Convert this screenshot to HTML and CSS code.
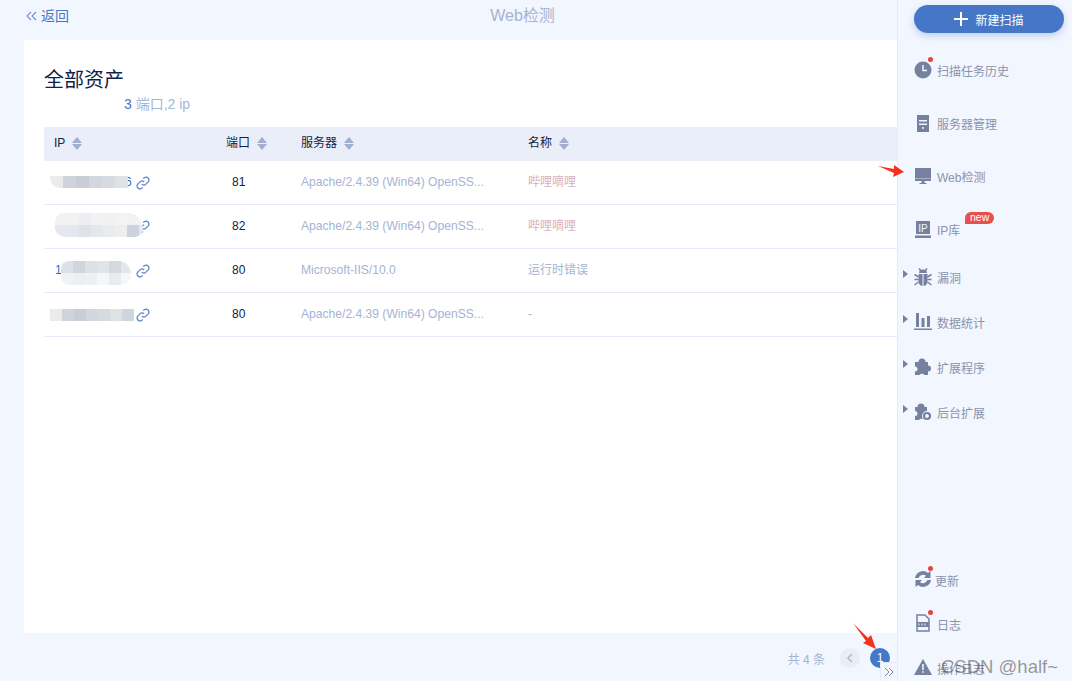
FILE: index.html
```html
<!DOCTYPE html>
<html lang="zh-CN">
<head>
    <meta charset="UTF-8">
    <meta name="viewport" content="width=device-width, initial-scale=1.0">
    <title>Web检测</title>
    <link rel="stylesheet" href="styles.css">
</head>
<body>
    <div class="app">
        <div class="main">
            <div class="topbar">
                <a class="back">
                    <svg width="11" height="10" viewBox="0 0 11 10"><path d="M5 1 1 5l4 4M10 1 6 5l4 4" fill="none" stroke="#6f8fc9" stroke-width="1.1"/></svg>
                    返回
                </a>
                <div class="page-title">Web检测</div>
            </div>

            <div class="card">
                <h2>全部资产</h2>
                <div class="summary"><b>3</b> 端口,2 ip</div>

                <div class="row head">
                    <div class="col-ip">IP <i class="sort"></i></div>
                    <div class="col-port">端口 <i class="sort"></i></div>
                    <div class="col-server">服务器 <i class="sort"></i></div>
                    <div class="col-name">名称 <i class="sort"></i></div>
                </div>

                <div class="row">
                    <div class="col-ip">
                        <span class="ip-end">6</span>
                        <span class="mosaic m1"><i></i><i></i><i></i><i></i><i></i><i></i></span>
                        <svg class="link" width="14" height="14" viewBox="0 0 24 24"><path d="M10 14a5 5 0 0 0 7 0l4-4a5 5 0 0 0-7-7l-1.500 1.500M14 10a5 5 0 0 0-7 0l-4 4a5 5 0 0 0 7 7l1.500-1.500" fill="none" stroke="#5b86cc" stroke-width="2.200"/></svg>
                    </div>
                    <div class="col-port">81</div>
                    <div class="col-server">Apache/2.4.39 (Win64) OpenSS...</div>
                    <div class="col-name pink">哔哩嘀哩</div>
                </div>
                <div class="row">
                    <div class="col-ip">
                        <span class="ip-start tiny">1</span>
                        <svg class="link" width="14" height="14" viewBox="0 0 24 24"><path d="M10 14a5 5 0 0 0 7 0l4-4a5 5 0 0 0-7-7l-1.500 1.500M14 10a5 5 0 0 0-7 0l-4 4a5 5 0 0 0 7 7l1.500-1.500" fill="none" stroke="#5b86cc" stroke-width="2.200"/></svg>
                        <span class="mosaic m2"><i></i><i></i><i></i><i></i><i></i><i></i><i></i><i></i></span>
                    </div>
                    <div class="col-port">82</div>
                    <div class="col-server">Apache/2.4.39 (Win64) OpenSS...</div>
                    <div class="col-name pink">哔哩嘀哩</div>
                </div>
                <div class="row">
                    <div class="col-ip">
                        <span class="ip-start">1</span>
                        <span class="mosaic m3"><i></i><i></i><i></i><i></i><i></i><i></i></span>
                        <svg class="link" width="14" height="14" viewBox="0 0 24 24"><path d="M10 14a5 5 0 0 0 7 0l4-4a5 5 0 0 0-7-7l-1.500 1.500M14 10a5 5 0 0 0-7 0l-4 4a5 5 0 0 0 7 7l1.500-1.500" fill="none" stroke="#5b86cc" stroke-width="2.200"/></svg>
                    </div>
                    <div class="col-port">80</div>
                    <div class="col-server">Microsoft-IIS/10.0</div>
                    <div class="col-name">运行时错误</div>
                </div>
                <div class="row">
                    <div class="col-ip">
                        <span class="mosaic m4"><i></i><i></i><i></i><i></i><i></i><i></i><i></i></span>
                        <svg class="link" width="14" height="14" viewBox="0 0 24 24"><path d="M10 14a5 5 0 0 0 7 0l4-4a5 5 0 0 0-7-7l-1.500 1.500M14 10a5 5 0 0 0-7 0l-4 4a5 5 0 0 0 7 7l1.500-1.500" fill="none" stroke="#5b86cc" stroke-width="2.200"/></svg>
                    </div>
                    <div class="col-port">80</div>
                    <div class="col-server">Apache/2.4.39 (Win64) OpenSS...</div>
                    <div class="col-name">-</div>
                </div>
            </div>

            <div class="pager">
                <span class="total">共 4 条</span>
                <span class="page-btn">
                    <svg width="8" height="10" viewBox="0 0 8 10"><path d="M6 1 2 5l4 4" fill="none" stroke="#b4bccb" stroke-width="1.600"/></svg>
                </span>
                <span class="page-num">1</span>
            </div>
        </div>

        <div class="sidebar">
            <div class="new-scan"><span class="plus"></span>新建扫描</div>

            <div class="menu">
                <div class="item">
                    <span class="ico dot">
                        <svg width="18" height="18" viewBox="0 0 18 18"><circle cx="9" cy="9" r="8.500" fill="#76809f"/><path d="M9 4v5.500h4" fill="none" stroke="#f2f6fe" stroke-width="1.500"/></svg>
                    </span>
                    扫描任务历史
                </div>
                <div class="item">
                    <span class="ico">
                        <svg width="18" height="18" viewBox="0 0 18 18"><path d="M3 1h12v17H3z" fill="#76809f"/><path d="M5 6h8v1.500H5zM5 9.500h8V11H5z" fill="#f2f6fe"/><circle cx="9" cy="14" r="1" fill="#f2f6fe"/></svg>
                    </span>
                    服务器管理
                </div>
                <div class="item">
                    <span class="ico">
                        <svg width="18" height="18" viewBox="0 0 18 18"><path d="M1 1h16v13H1z" fill="#76809f"/><path d="M1 11h16v1H1z" fill="#a9b0c6"/><path d="M7.500 14h3v2h2v1h-7v-1h2z" fill="#76809f"/></svg>
                    </span>
                    Web检测
                </div>
                <div class="item">
                    <span class="ico">
                        <svg width="18" height="18" viewBox="0 0 18 18"><path d="M2 1h14v13H2zM1 15.500h16V18H1z" fill="#76809f"/><text x="9" y="11.500" font-size="10" text-anchor="middle" fill="#f2f6fe" font-family="Liberation Sans">IP</text></svg>
                    </span>
                    IP库
                    <span class="badge">new</span>
                </div>

                <div class="item sub first">
                    <i class="caret"></i>
                    <span class="ico">
                        <svg width="18" height="18" viewBox="0 0 18 18"><path d="M5 5a4 3.500 0 0 1 8 0zM4.500 6h9v7.500a4.500 4.500 0 0 1-9 0z" fill="#76809f"/><path d="M.5 6.500l4 2.500M17.500 6.500l-4 2.500M.5 11.500h4M17.500 11.500h-4M.5 17l4-3M17.500 17l-4-3M5 .5l2 2.500M13 .5 11 3" stroke="#76809f" stroke-width="1.500"/><path d="M9 6v12" stroke="#f2f6fe" stroke-width="1"/></svg>
                    </span>
                    漏洞
                </div>
                <div class="item sub">
                    <i class="caret"></i>
                    <span class="ico">
                        <svg width="18" height="18" viewBox="0 0 18 18"><path d="M2 0h3v14H2zM7.500 5h3v9h-3zM13 3h3v11h-3zM0 15.500h18V17H0z" fill="#76809f"/></svg>
                    </span>
                    数据统计
                </div>
                <div class="item sub">
                    <i class="caret"></i>
                    <span class="ico">
                        <svg width="18" height="18" viewBox="0 0 18 18"><path d="M1 4h3.500a3.500 3.500 0 0 1 7 0H14v3.500a3 3 0 0 1 0 6V17h-3.500a3 3 0 0 0-5 0H1v-3.500a2.500 2.500 0 0 0 0-5z" fill="#76809f"/></svg>
                    </span>
                    扩展程序
                </div>
                <div class="item sub">
                    <i class="caret"></i>
                    <span class="ico">
                        <svg width="18" height="18" viewBox="0 0 18 18"><path d="M1 4h2.500a3.500 3.500 0 0 1 7 0H13v4a3 3 0 0 1 1 5v4h-4a3 3 0 0 0-5 0H1v-4a2.500 2.500 0 0 0 0-5z" fill="#76809f"/><circle cx="13" cy="13" r="5" fill="#f2f6fe"/><circle cx="13" cy="13" r="3" fill="none" stroke="#76809f" stroke-width="2.200"/></svg>
                    </span>
                    后台扩展
                </div>
            </div>

            <div class="bottom">
                <div class="item small">
                    <span class="ico dot">
                        <svg width="18" height="18" viewBox="0 0 18 18"><path d="M1 8a8 8 0 0 1 13-5l2.500-2v7H10l2-2.200A5 5 0 0 0 4.500 8zM17 10a8 8 0 0 1-13 5l-2.500 2v-7H8l-2 2.200a5 5 0 0 0 7.500-2.200z" fill="#76809f"/></svg>
                    </span>
                    更新
                </div>
                <div class="item small wide">
                    <span class="ico dot">
                        <svg width="18" height="18" viewBox="0 0 18 18"><path d="M3 1h8l4 4v12H3z" fill="#f2f6fe" stroke="#76809f" stroke-width="1.500"/><path d="M3 8h12v5H3z" fill="#76809f"/><path d="M5 9.500v2M8 9.500v2M11 9.500v2" stroke="#f2f6fe"/></svg>
                    </span>
                    日志
                </div>
                <div class="item small wide">
                    <span class="ico">
                        <svg width="18" height="18" viewBox="0 0 18 18"><path d="M9 1 18 17H0z" fill="#76809f"/><path d="M8.200 6h1.600v6H8.200zM8.200 13.200h1.600v1.600H8.200z" fill="#f2f6fe"/></svg>
                    </span>
                    操作日志
                </div>
            </div>
        </div>
    </div>

    <div class="collapse">
        <svg width="10" height="10" viewBox="0 0 10 10"><path d="M1 1l4 4-4 4M5 1l4 4-4 4" fill="none" stroke="#7d87a3" stroke-width="1"/></svg>
    </div>

    <!-- annotation arrows -->
    <svg class="arrow arrow-side" width="26" height="12" viewBox="0 0 26 12"><path d="M0 1 16 4l0-4 10 7-11 5 1-4z" fill="#f5301f"/></svg>
    <svg class="arrow arrow-page" width="26" height="26" viewBox="0 0 26 26"><path d="M0 0l15 15 3-3 5 14-13-6 3-2z" fill="#f5301f"/></svg>

    <div class="watermark">CSDN @half~</div>
</body>
</html>
```

FILE: styles.css
```css
html, body {
    height: 100%;
}
body {
    margin: 0;
    overflow: hidden;
    position: relative;
    background: #f2f6fe;
    color: #0e2347;
    font-family: "Liberation Sans", "Noto Sans CJK SC", sans-serif;
    font-size: 12px;
}
.app {
    display: flex;
    height: 681px;
}
.main {
    width: 897px;
    display: flex;
    flex-direction: column;
}
.topbar {
    height: 40px;
    flex: none;
    position: relative;
    padding-left: 26px;
    box-sizing: border-box;
}
.back {
    display: inline-flex;
    align-items: center;
    gap: 4px;
    height: 32px;
    font-size: 14px;
    line-height: 32px;
    color: #4a76c4;
}
.page-title {
    position: absolute;
    left: 0;
    right: 0;
    top: 5px;
    padding-left: 148px;
    text-align: center;
    font-size: 16px;
    line-height: 22px;
    color: #a5b4d0;
}
.card {
    margin-left: 24px;
    height: 593px;
    flex: none;
    background: #fff;
    padding: 27px 0 0 20px;
    box-sizing: border-box;
}
h2 {
    margin: 0;
    font-size: 20px;
    font-weight: 400;
    line-height: 26px;
}
.summary {
    margin-top: 1px;
    padding-left: 80px;
    font-size: 14px;
    line-height: 20px;
    color: #a5b6d6;
    height: 33px;
}
.summary b {
    font-weight: 400;
    color: #4a76c4;
}
.row {
    display: flex;
    align-items: center;
    height: 44px;
    box-sizing: border-box;
    border-bottom: 1px solid #e6ebf7;
    color: #a5b4d3;
}
.row > div {
    line-height: 16px;
    margin-top: -2px;
}
.row.head {
    height: 34px;
    background: #e9eef8;
    border-bottom: none;
    color: #0e2347;
}
.col-ip {
    width: 172px;
    flex: none;
    padding-left: 11px;
    box-sizing: border-box;
    display: flex;
    align-items: center;
    gap: 4px;
    position: relative;
    height: 44px;
}
.head .col-ip {
    padding-left: 10px;
    height: auto;
}
.head .col-ip, .head .col-port, .head .col-server, .head .col-name {
    display: flex;
    align-items: center;
    gap: 7px;
}
.col-port {
    width: 85px;
    flex: none;
    padding-left: 10px;
    box-sizing: border-box;
    color: #0e2347;
    text-indent: 6px;
}
.head .col-port {
    text-indent: 0;
}
.col-server {
    width: 227px;
    flex: none;
    font-size: 12.100px;
}
.head .col-server {
    font-size: 12px;
}
.col-name {
    flex: 1;
}
.pink {
    color: #d9b0bd;
}
.sort {
    display: inline-flex;
    flex-direction: column;
    gap: 1px;
    margin-top: 1px;
}
.sort::before, .sort::after {
    content: "";
    border-left: 5px solid transparent;
    border-right: 5px solid transparent;
}
.sort::before {
    border-bottom: 6px solid #a0aecf;
}
.sort::after {
    border-top: 6px solid #a0aecf;
}

/* blurred-out ip addresses */
.mosaic {
    position: absolute;
    display: flex;
    overflow: hidden;
}
.mosaic i {
    width: 12px;
    flex: none;
    height: 100%;
    background: #d2d7df;
}
.m1 i {
    width: 13px;
}
.m1 i:nth-child(1), .m4 i:nth-child(1) { background: #eaecec; }
.m1 i:nth-child(2), .m4 i:nth-child(2) { background: #cfd3dc; }
.m1 i:nth-child(3), .m4 i:nth-child(3) { background: #c8cdd6; }
.m1 i:nth-child(5), .m4 i:nth-child(5) { background: #d6dbe2; }
.m1 i:nth-child(6), .m4 i:nth-child(6) { background: #e0e1e3; }
.m4 i:nth-child(7) { background: #cfd5de; }
.m1 {
    left: 6px;
    top: 16px;
    height: 12px;
    width: 78px;
    border-bottom-left-radius: 10px;
}
.m2 {
    left: 11px;
    top: 9px;
    height: 24px;
    width: 88px;
    border-radius: 12px 22px 12px 14px;
}
.m2 i {
    background: linear-gradient(#f0f2f4 50%, #e4e7ed 50%);
}
.m2 i:nth-child(3) { background: linear-gradient(#eceef1 50%, #dfe3e9 50%); }
.m2 i:nth-child(5) { background: linear-gradient(#f0f1f3 50%, #e9ebee 50%); }
.m2 i:nth-child(6) { background: linear-gradient(#f3f3f4 50%, #eeeeef 50%); }
.m2 i:nth-child(7) { background: linear-gradient(#f0f2f4 50%, #ccd3df 50%); }
.m2 i:nth-child(8) { background: linear-gradient(#f2f3f6 50%, #e4e8f2 50%); }
.m3 {
    left: 17px;
    top: 13px;
    height: 24px;
    width: 70px;
    border-radius: 10px 16px 14px 10px;
}
.m3 i {
    background: linear-gradient(#dde1e7 50%, #f0f2f4 50%);
}
.m3 i:nth-child(2) { background: linear-gradient(#d2d6dc 50%, #eceef1 50%); }
.m3 i:nth-child(3) { background: linear-gradient(#dde0e5 50%, #eef0f3 50%); }
.m3 i:nth-child(4) { background: linear-gradient(#e0e4e8 50%, #f4f6f7 50%); }
.m3 i:nth-child(5) { background: linear-gradient(#d5d9df 50%, #e9ebee 50%); }
.m3 i:nth-child(6) { background: linear-gradient(#e4e6ea 50%, #f6f7f8 50%); }
.m4 {
    left: 6px;
    top: 17px;
    height: 12px;
    width: 85px;
}
.ip-end, .ip-start {
    color: #2f6fc4;
}
.ip-end {
    position: absolute;
    left: 81px;
}
.tiny {
    font-size: 9px;
    margin-top: 2px;
}
.link {
    position: absolute;
    left: 92px;
    top: 16px;
}

.pager {
    flex: 1;
    display: flex;
    align-items: center;
    justify-content: flex-end;
    padding: 0 7px 0 0;
    color: #a5b4d0;
    margin-top: 2px;
}
.total {
    margin-right: 15px;
}
.page-btn, .page-num {
    width: 20px;
    height: 20px;
    border-radius: 50%;
    display: flex;
    align-items: center;
    justify-content: center;
}
.page-btn {
    background: #e9eef6;
    margin-right: 10px;
}
.page-num {
    background: #4478c8;
    color: #fff;
}
.collapse {
    position: absolute;
    left: 880px;
    top: 662px;
    width: 17px;
    height: 19px;
    background: #f2f6fe;
    border: 1px solid #e3e9f6;
    border-width: 1px 0 0 1px;
    box-sizing: border-box;
    display: flex;
    align-items: center;
    justify-content: center;
}

.sidebar {
    width: 175px;
    flex: none;
    box-sizing: border-box;
    border-left: 1px solid #e6ebf7;
    display: flex;
    flex-direction: column;
    justify-content: space-between;
    padding-top: 5px;
    position: relative;
}
.new-scan {
    margin-left: 16px;
    width: 150px;
    height: 28px;
    border-radius: 14px;
    background: #4677c6;
    color: #fff;
    box-shadow: 0 3px 7px rgba(70, 119, 198, 0.3);
    display: flex;
    align-items: center;
    justify-content: center;
    gap: 7px;
}
.plus {
    width: 14px;
    height: 14px;
    background:
        linear-gradient(#fff, #fff) center / 14px 2px no-repeat,
        linear-gradient(#fff, #fff) center / 2px 14px no-repeat;
}
.menu {
    position: absolute;
    left: 0;
    top: 44px;
    right: 0;
}
.item {
    height: 53px;
    display: flex;
    align-items: center;
    gap: 5px;
    padding-left: 16px;
    color: #8a93ae;
    position: relative;
}
.item.sub {
    height: 45px;
}
.item.first {
    margin-top: -1px;
}
.ico {
    width: 18px;
    height: 18px;
    flex: none;
    position: relative;
    display: block;
    margin-top: -2px;
}
.ico svg {
    display: block;
}
.dot::after {
    content: "";
    position: absolute;
    right: -1px;
    top: -4px;
    width: 5px;
    height: 5px;
    border-radius: 50%;
    background: #e8413f;
}
.badge {
    position: absolute;
    left: 67px;
    top: 9px;
    height: 12px;
    line-height: 11px;
    padding: 0 5px;
    border-radius: 8px 8px 8px 0;
    background: #e8504c;
    color: #fff;
    font-size: 10.500px;
}
.caret {
    position: absolute;
    left: 5px;
    top: 15px;
    border-left: 5px solid #76809f;
    border-top: 4px solid transparent;
    border-bottom: 4px solid transparent;
}
.bottom {
    margin-bottom: -9px;
}
.item.small {
    height: 44px;
    gap: 3px;
}
.item.wide {
    gap: 5px;
}

.arrow {
    position: absolute;
}
.arrow-side {
    left: 878px;
    top: 165px;
}
.arrow-page {
    left: 853px;
    top: 623px;
}
.watermark {
    position: absolute;
    left: 941px;
    top: 656px;
    font-size: 18.500px;
    line-height: 22px;
    color: rgba(70, 70, 70, 0.55);
    white-space: nowrap;
}
```
